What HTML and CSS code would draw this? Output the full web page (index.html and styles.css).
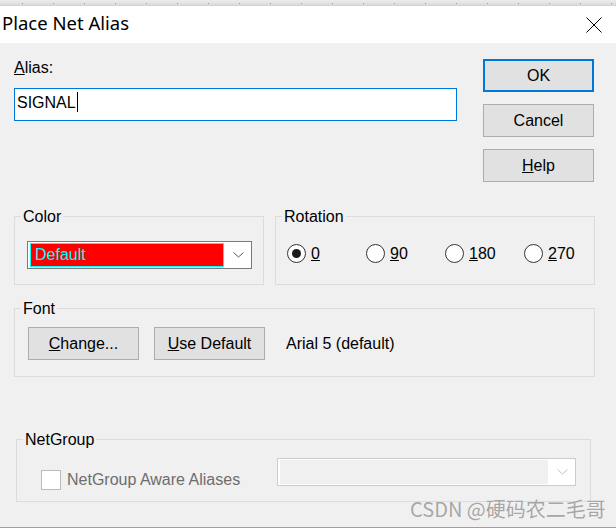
FILE: index.html
```html
<!DOCTYPE html>
<html>
<head>
<meta charset="utf-8">
<link rel="stylesheet" href="styles.css">
</head>
<body>
<div class="window">
  <div class="strip"><div class="dots"></div></div>
  <div class="titlebar">
    <span class="title">Place Net Alias</span>
    <svg class="close" width="16" height="16" viewBox="0 0 16 16"><path d="M0.5 0.5 L15.5 15.5 M15.5 0.5 L0.5 15.5" stroke="#000" stroke-width="1" fill="none"/></svg>
  </div>
  <div class="dialog">
    <div class="top-row">
      <div class="alias-col">
        <div class="label"><u>A</u>lias:</div>
        <div class="textbox">SIGNAL<span class="caret"></span></div>
      </div>
      <div class="btn-col">
        <div class="btn default">OK</div>
        <div class="btn">Cancel</div>
        <div class="btn"><u>H</u>elp</div>
      </div>
    </div>
    <div class="group-row">
      <fieldset class="group color-group">
        <legend>Color</legend>
        <div class="combo">
          <div class="combo-value">Default</div>
          <div class="combo-arrow"><svg width="11" height="6" viewBox="0 0 11 6"><polyline points="0.5,0.5 5.5,5 10.5,0.5" fill="none" stroke="#5a5a5a" stroke-width="1"/></svg></div>
        </div>
      </fieldset>
      <fieldset class="group rot-group">
        <legend>Rotation</legend>
        <div class="radios">
          <div class="radio checked"><span class="circle"></span><span><u>0</u></span></div>
          <div class="radio"><span class="circle"></span><span><u>9</u>0</span></div>
          <div class="radio"><span class="circle"></span><span><u>1</u>80</span></div>
          <div class="radio"><span class="circle"></span><span><u>2</u>70</span></div>
        </div>
      </fieldset>
    </div>
    <fieldset class="group font-group">
      <legend>Font</legend>
      <div class="font-row">
        <div class="btn"><u>C</u>hange...</div>
        <div class="btn use-default"><u>U</u>se Default</div>
        <span class="font-name">Arial 5 (default)</span>
      </div>
    </fieldset>
    <fieldset class="group net-group">
      <legend>NetGroup</legend>
      <div class="net-row">
        <div class="check-wrap"><span class="checkbox"></span><span class="disabled-text">NetGroup Aware Aliases</span></div>
        <div class="combo disabled">
          <div class="combo-value"></div>
          <div class="combo-arrow"><svg width="11" height="6" viewBox="0 0 11 6"><polyline points="0.5,0.5 5.5,5 10.5,0.5" fill="none" stroke="#c2c2c2" stroke-width="1"/></svg></div>
        </div>
      </div>
    </fieldset>
  </div>
  <div class="bottom-line"></div>
  <div class="watermark">CSDN @硬码农二毛哥</div>
</div>
</body>
</html>
```
FILE: styles.css
```css
* { box-sizing: border-box; }
html, body { margin: 0; padding: 0; }
body {
  width: 616px;
  height: 528px;
  overflow: hidden;
  background: #f0f0f0;
  font-family: "Liberation Sans", Arial, sans-serif;
  font-size: 16px;
  line-height: 18px;
  color: #000;
}
.window {
  position: relative;
  width: 616px;
  height: 528px;
  display: flex;
  flex-direction: column;
}
.strip {
  height: 6px;
  padding-top: 3px;
  background: linear-gradient(#ececec, #dedede 70%, #cfcfcf);
}
.dots {
  height: 1px;
  background: repeating-linear-gradient(to right, transparent 0 22px, #9a9a9a 22px 23px, transparent 23px 31px);
}
.titlebar {
  height: 37px;
  background: #fff;
  display: flex;
  align-items: flex-start;
  padding: 4px 14px 0 2px;
}
.title {
  font-family: "Noto Sans", sans-serif;
  font-size: 18.5px;
  line-height: 25px;
  color: #000;
}
.close { margin-left: auto; margin-top: 7px; }
.dialog {
  height: 484px;
  padding: 16px 21px 0 14px;
}
.bottom-line { height: 1px; background: #a0a0a0; }

.top-row { display: flex; justify-content: space-between; }
.alias-col { width: 443px; }
.label { margin-bottom: 11px; }
.textbox {
  height: 33px;
  border: 1px solid #0078d7;
  background: #fff;
  padding: 3px 2px 0;
}
.caret {
  display: inline-block;
  width: 1px;
  height: 20px;
  background: #000;
  vertical-align: -4px;
  margin-left: 1px;
}
.btn-col {
  display: flex;
  flex-direction: column;
  gap: 12px;
  width: 111px;
  margin-right: 1px;
}
.btn {
  width: 111px;
  height: 33px;
  background: #e1e1e1;
  border: 1px solid #adadad;
  display: flex;
  align-items: center;
  justify-content: center;
  flex: none;
}
.btn.default { border: 2px solid #0078d7; }

.group {
  margin: 0;
  padding: 0;
  border: 1px solid #dcdcdc;
  min-width: 0;
}
.group legend {
  margin-left: 6px;
  padding: 0 2px;
  line-height: 19px;
}
.group-row { display: flex; gap: 11px; margin-top: 25px; }
.color-group { width: 250px; flex: none; }
.rot-group { flex: 1; }

.combo {
  width: 225px;
  height: 28px;
  border: 1px solid #7a7a7a;
  background: #fff;
  display: flex;
  align-items: center;
  padding-left: 2px;
  flex: none;
}
.color-group .combo { margin: 15px 0 15px 12px; }
.combo-value {
  width: 194px;
  height: 24px;
  background: #ff0000;
  border: 1px solid #00ffff;
  color: #00ffff;
  padding-left: 4px;
  display: flex;
  align-items: center;
}
.combo-arrow {
  flex: 1;
  display: flex;
  justify-content: center;
  align-items: center;
  padding-left: 1px;
}
.combo-arrow svg { display: block; }

.radios {
  display: grid;
  grid-template-columns: repeat(4, 79px);
  margin: 18px 0 0 11px;
}
.radio { display: flex; align-items: center; gap: 5px; height: 19px; }
.circle {
  width: 19px;
  height: 19px;
  border: 1px solid #333;
  border-radius: 50%;
  background: #fff;
  display: flex;
  align-items: center;
  justify-content: center;
  flex: none;
}
.radio.checked .circle::after {
  content: "";
  width: 9px;
  height: 9px;
  border-radius: 50%;
  background: #1b1b1b;
}

.font-group { margin-top: 14px; }
.font-row {
  display: flex;
  align-items: center;
  margin: 9px 0 16px 13px;
}
.use-default { margin-left: 15px; }
.font-name { margin-left: 21px; }

.net-group { margin: 53px 4px 0 2px; }
.net-row {
  display: flex;
  justify-content: space-between;
  align-items: flex-start;
  height: 28px;
  margin: 9px 14px 15px 24px;
}
.check-wrap {
  display: flex;
  align-items: center;
  gap: 6px;
  height: 20px;
  margin-top: 12px;
}
.checkbox {
  width: 20px;
  height: 20px;
  border: 1px solid #bcbcbc;
  background: #fff;
  flex: none;
}
.disabled-text { color: #6d6d6d; }
.combo.disabled {
  width: 299px;
  border-color: #cccccc;
}
.combo.disabled .combo-value {
  width: 268px;
  background: #f0f0f0;
  border: none;
}

.watermark {
  position: absolute;
  left: 410px;
  top: 499px;
  font-family: "Noto Sans CJK SC", "Noto Sans", sans-serif;
  font-size: 20px;
  line-height: 20px;
  color: #a6a6a6;
  text-shadow: 0 0 1px #fff;
  white-space: nowrap;
}
```
